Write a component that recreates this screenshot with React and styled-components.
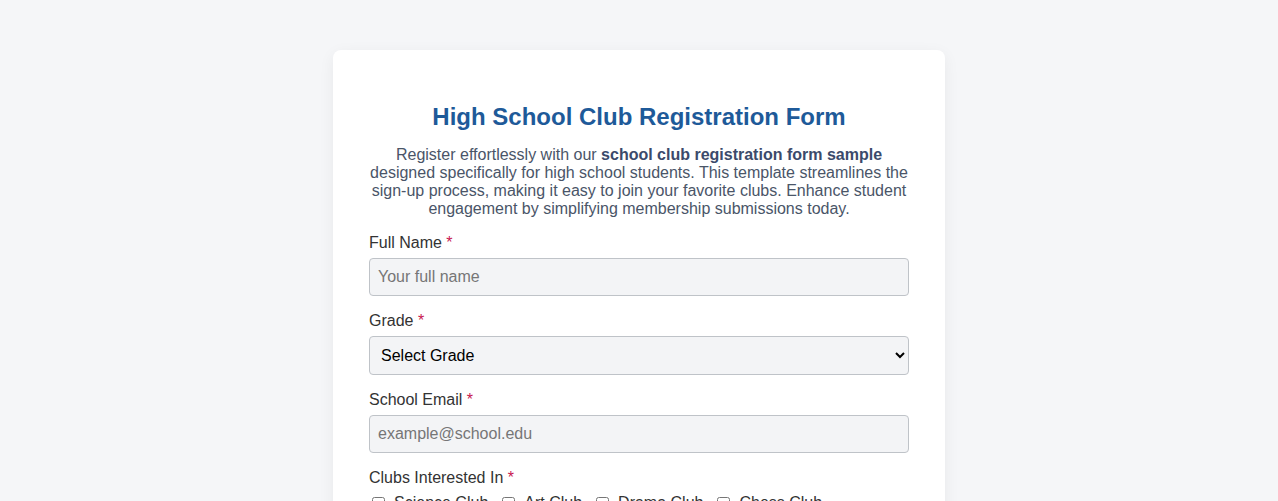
import React from "react";
import styled, { createGlobalStyle } from "styled-components";

const Global = createGlobalStyle`
  html, body { margin: 0; padding: 0; }
  body {
    background: #f5f6f8;
    font-family: "Liberation Sans", Arial, sans-serif;
    color: #333;
  }
`;

const Page = styled.div`
  display: flex;
  justify-content: center;
  padding: 50px 0 40px;
`;

const Card = styled.div`
  width: 612px;
  box-sizing: border-box;
  background: #fff;
  border-radius: 8px;
  box-shadow: 0 4px 16px rgba(0, 0, 0, 0.06);
  padding: 53px 36px 36px;
`;

const Title = styled.h1`
  margin: 0 0 15px;
  text-align: center;
  font-size: 24px;
  font-weight: 700;
  color: #1e5a99;
`;

const Description = styled.p`
  margin: 0 0 15px;
  text-align: center;
  font-size: 16px;
  line-height: 18px;
  color: #4a5568;
  b { color: #3b4a6b; font-weight: 700; }
`;

const Group = styled.div`
  margin-bottom: 15px;
`;

const Label = styled.label`
  display: block;
  font-size: 16px;
  line-height: 18px;
  color: #333;
  padding-top: 1px;
  margin-bottom: 6px;
`;

const Req = styled.span`
  color: #c8174f;
`;

const fieldCss = `
  display: block;
  width: 100%;
  box-sizing: border-box;
  border: 1px solid #bfc3c8;
  border-radius: 4px;
  background: #f3f4f6;
  font-family: "Liberation Sans", Arial, sans-serif;
  font-size: 16px;
  outline: none;
`;

const Input = styled.input`
  ${fieldCss}
  height: 38px;
  padding: 0 8px;
  color: #333;
  &::placeholder { color: #767676; }
`;

const Select = styled.select`
  ${fieldCss}
  height: 39px;
  padding: 0 7px;
  color: #000;
`;

const Checks = styled.div`
  display: flex;
  gap: 11px;
  flex-wrap: wrap;
  padding-top: 1px;
`;

const CheckLabel = styled.label`
  display: flex;
  align-items: center;
  gap: 9px;
  font-size: 16px;
  color: #333;
`;

const Box = styled.input`
  margin: 0 0 0 3px;
  width: 13px;
  height: 13px;
`;

export default function App() {
  return (
    <>
      <Global />
      <Page>
        <Card>
          <Title>High School Club Registration Form</Title>
          <Description>
            Register effortlessly with our <b>school club registration form sample</b> designed
            specifically for high school students. This template streamlines the sign-up process,
            making it easy to join your favorite clubs. Enhance student engagement by simplifying
            membership submissions today.
          </Description>
          <Group>
            <Label>Full Name <Req>*</Req></Label>
            <Input placeholder="Your full name" />
          </Group>
          <Group>
            <Label>Grade <Req>*</Req></Label>
            <Select defaultValue="">
              <option value="">Select Grade</option>
              <option>9th Grade</option>
              <option>10th Grade</option>
              <option>11th Grade</option>
              <option>12th Grade</option>
            </Select>
          </Group>
          <Group>
            <Label>School Email <Req>*</Req></Label>
            <Input placeholder="example@school.edu" />
          </Group>
          <Group>
            <Label>Clubs Interested In <Req>*</Req></Label>
            <Checks>
              {["Science Club", "Art Club", "Drama Club", "Chess Club"].map((c) => (
                <CheckLabel key={c}>
                  <Box type="checkbox" />
                  {c}
                </CheckLabel>
              ))}
            </Checks>
          </Group>
        </Card>
      </Page>
    </>
  );
}
